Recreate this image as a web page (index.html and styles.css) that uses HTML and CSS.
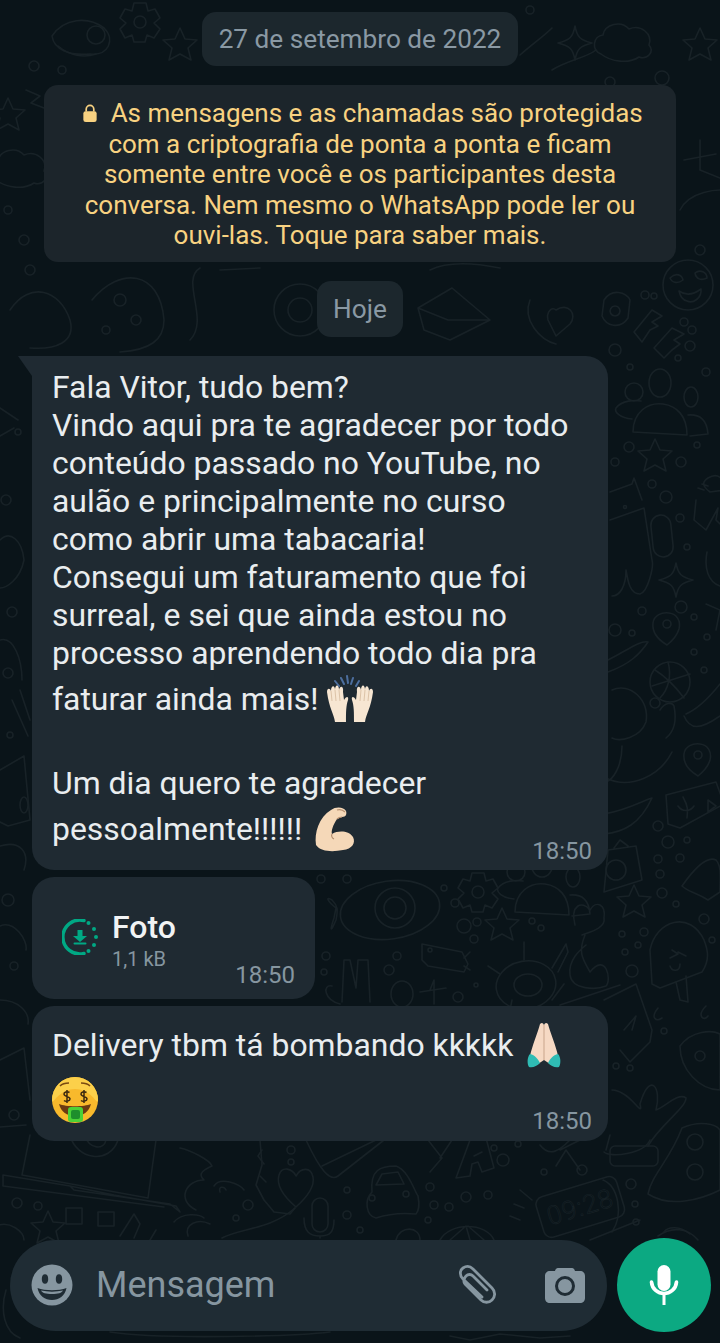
FILE: index.html
```html
<!DOCTYPE html>
<html lang="pt-BR">
<head>
<meta charset="utf-8">
<title>WhatsApp</title>
<link rel="stylesheet" href="styles.css">
</head>
<body>
<div class="screen">
  <svg class="doodles" viewBox="0 0 720 1343" aria-hidden="true">
    <defs>
      <g id="star"><path d="M0-17 5-6 17-5 8 3 11 15 0 9-11 15-8 3-17-5-5-6Z"/></g>
      <g id="spark"><path d="M0-17C2-6 5-3 17 0 5 3 2 6 0 17-2 6-5 3-17 0-5-3-2-6 0-17Z"/></g>
      <g id="pin"><path d="M0 18C-10 12-15 4-14-4-13-12-5-15 2-14 10-13 14-6 12 2 10 9 5 14 0 18Z"/><circle cy="-3" r="4"/></g>
      <g id="gear"><path d="M-6-19 6-19 8-11 15-13 20-4 14 1 20 7 14 16 7 13 5 20-6 20-8 13-15 16-20 7-14 1-20-4-15-13-8-11Z"/><circle r="6"/></g>
      <g id="cloud"><path d="M-24 12C-34 8-32-6-22-7-20-18-4-22 4-13 16-18 28-8 24 3 30 10 22 18 14 15 4 22-14 20-24 12Z"/></g>
      <g id="people"><path d="M-27 20C-27 0-12-10 3-8 17-6 27 4 27 23Z"/><ellipse cy="-29" rx="11" ry="14"/><circle cx="-26" cy="-20" r="9"/><ellipse cx="31" cy="-15" rx="7" ry="10"/><path d="M-28 7C-40 6-46 0-44-4-38-12-25-12-19-11"/><path d="M28 3C40 2 47 8 48 22L30 24"/></g>
      <g id="face"><circle r="25"/><path d="M-18-7C-12-13-6-10-5-5-10-1-16-2-18-7ZM7-12C12-16 19-13 19-7 13-4 8-6 7-12ZM-9 6C-2 11 5 10 13 4 14 13 5 19-1 16-5 15-8 11-9 6Z"/></g>
      <g id="heart"><path d="M0 24C-14 12-20 2-17-8-14-17-4-15 0-7 5-16 15-16 17-6 19 4 10 15 0 24Z"/></g>
    </defs>
    <g class="doodle-lines">
      <!-- top -->
      <use href="#gear" x="140" y="22"/>
      <path d="M52 36C64 18 88 16 104 28 116 40 108 56 90 54 70 56 54 50 52 36Z"/><circle cx="96" cy="35" r="9"/><path d="M58 46C70 56 84 58 96 54"/>
      <use href="#star" x="180" y="45"/><use href="#cloud" x="625" y="42"/>
      <use href="#spark" x="575" y="43"/><use href="#star" x="700" y="45"/>
      <path d="M26 90 40 96 31 103 44 108"/>
      <circle cx="34" cy="66" r="5"/><circle cx="62" cy="70" r="4"/><circle cx="530" cy="10" r="4"/>
      <path d="M520 55C535 42 544 36 552 28"/><path d="M552 70C568 60 586 58 596 50"/><circle cx="662" cy="78" r="7"/><circle cx="610" cy="82" r="5"/>
      <use href="#star" x="8" y="115"/><use href="#cloud" x="20" y="168"/>
      <path d="M700 140 700 170 720 178M684 160 716 154"/><path d="M680 210C690 190 720 190 720 190"/>
      <circle cx="24" cy="240" r="5"/><circle cx="8" cy="210" r="4"/><circle cx="700" cy="250" r="5"/>
      <!-- behind the notices -->
      <circle cx="30" cy="270" r="5"/><path d="M10 310C30 280 60 290 70 320 76 342 56 350 30 348"/>
      <path d="M92 300C120 266 160 270 164 320 164 340 150 350 120 352"/><circle cx="120" cy="300" r="6"/><circle cx="136" cy="320" r="5"/><circle cx="106" cy="330" r="4"/>
      <path d="M200 268C180 280 210 320 190 340M220 270 260 268"/>
      <circle cx="300" cy="310" r="26"/><circle cx="300" cy="310" r="12"/>
      <path d="M418 308 452 288 490 320 450 340 424 330ZM418 308 448 320 490 320"/><path d="M430 270C450 260 480 264 500 268"/>
      <path d="M530 300C522 320 540 340 556 344M556 310C568 302 578 314 570 324L556 336 548 320C546 312 552 306 556 310Z"/>
      <use href="#face" x="688" y="285"/>
      <path d="M604 300C612 288 626 292 630 300L628 318C620 330 606 326 602 316ZM615 306a5 5 0 1 0 .1 0Z"/>
      <path d="M634 332 652 310 662 316 652 322 658 326 650 330 642 342ZM654 348 672 328 684 334 674 340 680 344 672 350 664 358Z"/>
      <circle cx="615" cy="350" r="6"/><circle cx="645" cy="295" r="4"/><circle cx="654" cy="296" r="3"/><circle cx="684" cy="322" r="4"/><circle cx="692" cy="330" r="4"/><circle cx="690" cy="346" r="5"/><circle cx="678" cy="358" r="3"/><circle cx="706" cy="372" r="4"/><circle cx="630" cy="367" r="3"/>
      <use href="#people" x="660" y="412"/>
      <use href="#star" x="655" y="456"/><circle cx="629" cy="447" r="5"/><circle cx="615" cy="462" r="4"/><circle cx="681" cy="462" r="5"/><circle cx="697" cy="445" r="3"/>
      <path d="M708 478C718 472 724 478 724 490L710 492C702 486 702 482 708 478ZM708 486 702 484M704 490 698 488"/>
      <path d="M610 492 632 484 634 478 642 500M610 520 644 508 652 560C654 566 648 592 640 594 630 594 628 582 626 570 626 586 620 596 612 596"/><circle cx="625" cy="507" r="1.5"/>
      <rect x="652" y="515" width="20" height="42" rx="10" transform="rotate(-6 662 536)"/>
      <circle cx="652" cy="484" r="4"/><circle cx="666" cy="497" r="6"/><circle cx="680" cy="518" r="4"/><circle cx="687" cy="547" r="3"/>
      <path d="M696 500 694 520 706 530 718 508 716 520 720 524"/>
      <use href="#spark" x="676" y="580"/><path d="M707 552C704 568 708 582 720 586M706 604 720 610 716 630"/>
      <circle cx="681" cy="607" r="6"/><circle cx="642" cy="611" r="4"/><circle cx="615" cy="630" r="6"/><circle cx="632" cy="633" r="3"/><circle cx="694" cy="617" r="3"/>
      <use href="#pin" x="667" y="627"/>
      <circle cx="670" cy="682" r="20"/><path d="M655 670C668 678 678 690 684 698M668 662C672 676 668 690 660 698M652 686 690 674"/>
      <circle cx="707" cy="637" r="3"/><circle cx="694" cy="652" r="3"/><circle cx="704" cy="670" r="3"/>
      <path d="M608 660C628 650 640 640 648 642 640 654 630 664 608 672"/><path d="M612 690C630 682 650 700 646 722 640 738 620 742 612 738"/>
      <path d="M660 710C665 702 672 702 674 706 676 716 676 730 666 738"/><circle cx="655" cy="703" r="5"/>
      <path d="M686 714C700 708 712 694 720 684M684 716C690 730 700 730 720 716"/>
      <!-- right, lower -->
      <path d="M622 746C622 768 612 780 606 782M606 778C630 790 660 776 672 752"/>
      <use href="#pin" x="698" y="758"/>
      <path d="M666 795 716 782 724 804 680 828 668 824Z"/><path d="M683 797C688 806 688 810 687 818M678 806C682 812 690 812 694 806M708 800 716 806 708 812Z"/>
      <path d="M604 814C628 810 644 800 652 798 640 824 624 832 604 834"/><circle cx="658" cy="826" r="5"/><circle cx="668" cy="842" r="6"/><circle cx="687" cy="840" r="3"/>
      <circle cx="658" cy="859" r="4"/><circle cx="680" cy="858" r="4"/><circle cx="660" cy="874" r="4"/><circle cx="662" cy="893" r="5"/><circle cx="676" cy="904" r="3"/>
      <path d="M608 850 636 846 642 880 604 892ZM614 848 620 840 628 846"/><circle cx="616" cy="870" r="10"/>
      <use href="#star" x="634" y="902"/>
      <path d="M682 886C696 866 708 856 716 860 722 866 720 880 720 892L708 900C696 892 688 892 682 886Z"/>
      <path d="M650 950C656 920 690 910 704 940 708 950 710 960 702 972L660 988 652 984Z"/><path d="M676 982 680 1000 688 1002 686 976"/><path d="M672 950 678 954 670 958M678 952 686 956"/><path d="M670 966C672 972 680 972 680 964"/>
      <circle cx="622" cy="934" r="3"/><circle cx="644" cy="932" r="4"/><circle cx="625" cy="952" r="3"/><circle cx="638" cy="945" r="3"/><circle cx="632" cy="971" r="6"/><circle cx="704" cy="919" r="5"/><circle cx="712" cy="940" r="3"/>
      <path d="M604 1000 636 984 652 1030 650 1042 630 1062 620 1050"/><path d="M624 1030 636 1016 632 1030"/>
      <path d="M658 1008C650 1018 656 1022 662 1018M706 1006C696 1016 704 1022 708 1016"/><circle cx="664" cy="1031" r="3"/>
      <path d="M680 1046C692 1030 712 1030 720 1034V1090C700 1090 680 1070 680 1046Z"/><circle cx="700" cy="1056" r="5"/>
      <circle cx="616" cy="1066" r="3"/><circle cx="630" cy="1068" r="3"/>
      <path d="M612 1090C630 1090 644 1120 640 1104 650 1070 662 1088 656 1110 664 1108 678 1092 686 1098 686 1108 660 1125 648 1146"/><rect x="610" y="1146" width="48" height="20" rx="5"/>
      <path d="M648 1194C652 1174 670 1160 682 1128 700 1120 716 1124 720 1130V1190C700 1200 670 1208 648 1194Z"/><circle cx="695" cy="1142" r="8"/><circle cx="695" cy="1172" r="8"/>
      <circle cx="631" cy="1184" r="5"/><circle cx="635" cy="1204" r="3"/><path d="M603 1180C618 1186 624 1214 612 1232"/>
      <!-- between bubbles, centre right -->
      <ellipse cx="390" cy="910" rx="50" ry="29" transform="rotate(-8 390 910)"/><circle cx="395" cy="908" r="20"/><circle cx="395" cy="908" r="11"/>
      <path d="M336 908C326 900 326 896 332 900 338 906 338 910 336 920 330 934 330 930 334 918Z"/>
      <use href="#gear" x="478" y="892"/>
      <use href="#star" x="502" y="925"/>
      <circle cx="464" cy="926" r="7"/><circle cx="477" cy="922" r="4"/><circle cx="474" cy="939" r="4"/><circle cx="455" cy="903" r="4"/><circle cx="444" cy="888" r="3"/><circle cx="532" cy="921" r="3"/><circle cx="541" cy="928" r="3"/><circle cx="347" cy="879" r="4"/><circle cx="321" cy="879" r="4"/><circle cx="326" cy="956" r="4"/><circle cx="324" cy="972" r="3"/><circle cx="397" cy="956" r="4"/><circle cx="389" cy="970" r="5"/>
      <use href="#people" x="542" y="892"/>
      <path d="M575 925C570 905 582 900 590 910 596 900 606 904 604 918 606 928 590 932 582 935M585 935C578 952 582 958 590 972 606 952 612 980 606 986 596 990 572 990 570 975 568 960 580 950 586 945"/>
      <path d="M422 944 462 952 468 964 464 972 428 966 422 960Z"/><path d="M464 958 470 952M464 966 470 970"/><circle cx="430" cy="950" r="2"/>
      <ellipse cx="526" cy="985" rx="30" ry="24" transform="rotate(-10 526 985)"/><ellipse cx="528" cy="985" rx="14" ry="11"/><path d="M500 974 488 966M552 968 566 944 568 952 558 972M524 960 524 942M510 1010 512 1000M552 1000 564 984"/>
      <path d="M342 1002 344 960 350 960 356 988 358 960 368 960 370 1002M340 1004C324 1000 322 984 332 986"/>
      <ellipse cx="402" cy="994" rx="11" ry="13"/><path d="M430 990 434 980M420 992 446 988M434 1004 434 980"/>
      <circle cx="458" cy="997" r="5"/><circle cx="476" cy="985" r="2"/>
      <path d="M560 1005 620 985"/>
      <!-- bottom band -->
      <path d="M30 1135 22 1175 148 1198 156 1140M3 1175 70 1186 74 1190 170 1204 180 1212 176 1206 114 1195 70 1186M3 1175V1186L164 1207"/>
      <path d="M70 1135C76 1160 110 1165 118 1140"/><path d="M84 1135C90 1150 104 1150 106 1140"/>
      <circle cx="17" cy="1203" r="5"/><circle cx="38" cy="1206" r="4"/>
      <rect x="66" y="1208" width="16" height="16"/><rect x="98" y="1212" width="16" height="14"/>
      <use href="#star" x="48" y="1228"/><path d="M120 1236 134 1214 140 1224 134 1238M150 1240 156 1230"/>
      <path d="M-4 1226C10 1220 24 1232 24 1240"/>
      <path d="M180 1148C190 1150 210 1160 212 1166 198 1172 200 1176 204 1180 186 1180 176 1200 196 1210M174 1222C182 1212 200 1214 204 1218M188 1236C184 1224 198 1218 210 1224"/>
      <path d="M214 1186C220 1176 240 1184 244 1190M220 1192C218 1186 224 1186 226 1190"/>
      <path d="M260 1140 262 1165 256 1185 264 1200 274 1212 290 1214 295 1208"/><path d="M262 1150 258 1156 264 1164M260 1176 266 1182"/>
      <circle cx="291" cy="1150" r="4"/><circle cx="291" cy="1162" r="3"/><circle cx="248" cy="1205" r="5"/><circle cx="236" cy="1218" r="3"/>
      <path d="M222 1238C240 1228 270 1230 295 1208"/>
      <use href="#heart" x="296" y="1183"/>
      <rect x="312" y="1198" width="16" height="34" rx="8"/><path d="M304 1218C304 1232 310 1236 320 1236 330 1236 334 1232 334 1220M320 1236V1238"/>
      <path d="M306 1140C320 1170 330 1182 338 1176L384 1140M322 1166 376 1140"/>
      <path d="M372 1192C370 1170 380 1166 396 1166 408 1170 414 1190 418 1196 420 1206 418 1212 416 1214 396 1212 382 1216 376 1218 366 1216 364 1200 372 1192Z"/><path d="M376 1185 382 1174 398 1172 404 1184Z"/><circle cx="372" cy="1198" r="3"/><circle cx="406" cy="1194" r="3"/>
      <circle cx="347" cy="1190" r="3"/><circle cx="347" cy="1215" r="4"/><circle cx="430" cy="1187" r="4"/><circle cx="434" cy="1205" r="4"/><circle cx="449" cy="1207" r="4"/><circle cx="466" cy="1197" r="5"/><circle cx="488" cy="1195" r="4"/><circle cx="428" cy="1220" r="3"/><circle cx="360" cy="1230" r="3"/>
      <path d="M456 1178 470 1140 486 1138 494 1168 482 1172 478 1162 472 1164 470 1176Z"/><path d="M474 1156 482 1152"/>
      <path d="M428 1140 442 1158 430 1172M452 1140 440 1158"/>
      <circle cx="503" cy="1160" r="6"/><circle cx="494" cy="1148" r="3"/><circle cx="518" cy="1144" r="3"/>
      <path d="M396 1240C400 1225 420 1226 420 1240M440 1240C450 1222 486 1222 494 1240M450 1240 466 1226 470 1240M484 1240 468 1226"/>
      <path d="M540 1145C550 1158 560 1150 570 1140M560 1150 580 1140M556 1166 566 1150 580 1170"/>
      <circle cx="582" cy="1170" r="5"/><circle cx="544" cy="1172" r="3"/>
      <path d="M520 1190 532 1200M514 1204 524 1208M510 1216 520 1220"/>
      <g transform="rotate(-17 580 1206)"><rect x="538" y="1186" width="84" height="42" rx="8"/><text class="doodle-text" x="580" y="1216">09:28</text></g>
      <path d="M604 1152C610 1158 644 1154 650 1140M610 1135 606 1150"/>
      <path d="M590 1240 640 1220"/><circle cx="636" cy="1222" r="3"/>
      <path d="M664 1232C668 1226 680 1226 690 1234"/>
      <!-- left strip -->
      <path d="M14 428 0 436M0 408 18 420"/><circle cx="18" cy="432" r="3"/><circle cx="6" cy="500" r="5"/>
      <path d="M0 540C10 530 22 540 24 560 20 580 6 588 0 588"/>
      <circle cx="12" cy="612" r="5"/>
      <path d="M0 640C14 636 22 660 22 680"/><circle cx="8" cy="673" r="5"/><path d="M12 700 28 736M20 690 30 720"/>
      <circle cx="10" cy="735" r="3"/>
      <path d="M0 770 24 756 30 820 8 826 0 822"/><ellipse cx="24" cy="805" rx="4" ry="8"/>
      <path d="M0 846C20 840 30 852 24 870"/>
      <circle cx="8" cy="900" r="6"/><path d="M0 926C14 920 28 940 26 950"/><circle cx="14" cy="966" r="4"/>
      <path d="M0 1000C18 1000 30 1012 28 1024"/><path d="M0 1060 24 1048 30 1100"/><circle cx="14" cy="1115" r="5"/>
      <path d="M0 1127 26 1125"/>
      <!-- input band -->
      <path d="M6 1290C0 1310 4 1332 20 1338M110 1332C160 1340 300 1336 330 1332M450 1336 470 1340 500 1334 540 1338 570 1336"/>
      <path d="M658 1236C672 1226 688 1228 698 1240"/>
    </g>
  </svg>

  <header class="system-stack">
    <div class="pill">27 de setembro de 2022</div>
    <div class="notice">
      <svg class="lock" viewBox="0 0 16 20" aria-hidden="true"><path d="M4 8V5.500a4 4 0 0 1 8 0V8" fill="none" stroke="currentColor" stroke-width="1.800"/><rect x="1" y="7.500" width="14" height="11.500" rx="2.500" fill="currentColor"/></svg>
      As mensagens e as chamadas são protegidas<br>
      com a criptografia de ponta a ponta e ficam<br>
      somente entre você e os participantes desta<br>
      conversa. Nem mesmo o WhatsApp pode ler ou<br>
      ouvi-las. Toque para saber mais.
    </div>
    <div class="pill pill-today">Hoje</div>
  </header>

  <main class="messages">
    <article class="bubble bubble-first">
      <div class="line">Fala Vitor, tudo bem?</div>
      <div class="line">Vindo aqui pra te agradecer por todo</div>
      <div class="line">conteúdo passado no YouTube, no</div>
      <div class="line">aulão e principalmente no curso</div>
      <div class="line">como abrir uma tabacaria!</div>
      <div class="line">Consegui um faturamento que foi</div>
      <div class="line">surreal, e sei que ainda estou no</div>
      <div class="line">processo aprendendo todo dia pra</div>
      <div class="line line-emoji">faturar ainda mais!
        <svg class="emoji emoji-hands" viewBox="0 0 48 48" aria-hidden="true">
          <path d="M21 1 22 8M15 3 18 9M27 3 25 9M9 6 13 11M33 6 30 11" stroke="#4d6f9f" stroke-width="2" stroke-linecap="round" fill="none"/>
          <g id="hand">
            <path d="M1 17C1 13 4 13 5 16 5 10 9 10 9 15 9 9 13 9 13 15 14 10 18 11 17 17L18 25C20 21 23 21 22 25 20 31 20 37 20 47H9C8 39 3 33 1 17Z" fill="#f7e6d2"/>
            <path d="M5 16 6 26M9 15 10 26M13 15 14 26" stroke="#dcc3a8" stroke-width="1" fill="none"/>
          </g>
          <use href="#hand" transform="matrix(-1 0 0 1 48 0)"/>
        </svg>
      </div>
      <div class="line line-blank"></div>
      <div class="line">Um dia quero te agradecer</div>
      <div class="line line-emoji">pessoalmente!!!!!!
        <svg class="emoji emoji-muscle" viewBox="0 0 44 48" aria-hidden="true">
          <path d="M3 40C1 28 6 12 18 5 23 1 31 2 33 6 34 9 33 12 29 12L24 14C20 20 18 26 19 29 26 25 36 26 40 32 43 38 39 44 30 45 20 47 8 47 3 40Z" fill="#f5d8b8"/>
          <path d="M24 5C27 4 30 5 32 7M24 14C26 12 28 12 29 12M19 29C18 31 19 33 21 34" stroke="#b58f6f" stroke-width="1.200" fill="none"/>
        </svg>
      </div>
      <time class="stamp">18:50</time>
    </article>

    <article class="bubble bubble-file">
      <svg class="download" viewBox="0 0 36 36" aria-hidden="true">
        <path d="M22 1.500A17 17 0 1 0 22 34.500" fill="none" stroke="#00a884" stroke-width="3.400" stroke-linecap="round"/>
        <g fill="#00a884"><circle cx="26.500" cy="4" r="2"/><circle cx="32" cy="10" r="2"/><circle cx="34" cy="18" r="2"/><circle cx="32" cy="26" r="2"/><circle cx="26.500" cy="32" r="2"/></g>
        <path d="M15.500 11h5v6H25L18 23 11 17h4.500Z" fill="#00a884"/><rect x="11.500" y="23.500" width="13" height="2" rx="1" fill="#00a884"/>
      </svg>
      <div class="file-info">
        <div class="file-title">Foto</div>
        <div class="file-size">1,1 kB</div>
      </div>
      <time class="stamp">18:50</time>
    </article>

    <article class="bubble bubble-last">
      <div class="line line-emoji line-pray">Delivery tbm tá bombando kkkkk
        <svg class="emoji emoji-pray" viewBox="0 0 36 46" aria-hidden="true">
          <path d="M14 2C16 0 17 1 18 3 19 1 20 0 22 2 24 10 30 24 32 34L24 42 18 38 12 42 4 34C6 24 12 10 14 2Z" fill="#f6d9c4"/>
          <path d="M18 3V38" stroke="#c9a58c" stroke-width="1"/>
          <path d="M4 32C1 35 1 42 3 45 7 46 11 44 14 41 12 37 9 33 4 32ZM32 32C35 35 35 42 33 45 29 46 25 44 22 41 24 37 27 33 32 32Z" fill="#2fbcb4"/>
        </svg>
      </div>
      <div class="line line-emoji line-money">
        <svg class="emoji emoji-money" viewBox="0 0 46 46" aria-hidden="true">
          <circle cx="23" cy="23" r="23" fill="#f8b92c"/><path d="M23 0A23 23 0 0 1 46 23C46 30 40 12 23 12S0 30 0 23A23 23 0 0 1 23 0Z" fill="#fcd04a"/>
          <path d="M8 9C11 6 14 6 17 6M38 9C35 6 32 6 29 6" stroke="#7a4a12" stroke-width="1.600" fill="none"/>
          <path d="M7 27C14 30 32 30 39 27 37 35 31 39 23 39S9 35 7 27Z" fill="#6b3a12"/>
          <rect x="16" y="30" width="15" height="15" rx="3" fill="#4cd137"/><rect x="19" y="33" width="9" height="9" rx="2" fill="#1e8e2c"/>
          <path d="M17.500 15.500C15 14 12 15 12 17 12 20 18 19 18 22 18 24 14 25 12 23.500M15 13V26M34.500 15.500C32 14 29 15 29 17 29 20 35 19 35 22 35 24 31 25 29 23.500M32 13V26" fill="none" stroke="#3d2a10" stroke-width="1.500"/>
        </svg>
      </div>
      <time class="stamp">18:50</time>
    </article>
  </main>

  <footer class="composer">
    <div class="input">
      <svg class="icon-smile" viewBox="0 0 42 42" aria-hidden="true">
        <circle cx="21" cy="21" r="20.500" fill="#8696a0"/>
        <ellipse cx="14" cy="15" rx="3.200" ry="4.800" fill="#1f2c34"/><ellipse cx="28" cy="15" rx="3.200" ry="4.800" fill="#1f2c34"/>
        <path d="M6.500 24C14 27 28 27 35.500 24 34 32 28 36 21 36S8 32 6.500 24Z" fill="#1f2c34"/><path d="M10 26.500C17 28 25 28 32 26.500 31 29 27 30 21 30S11 29 10 26.500Z" fill="#8696a0"/>
      </svg>
      <span class="placeholder">Mensagem</span>
      <svg class="icon-clip" viewBox="0 0 44 42" aria-hidden="true">
        <path d="M28 33 9 15C5 11 6 6 9 4 12 2 16 2 19 5L38 24C42 28 41 33 38 36 35 39 30 39 27 36L11 20C9 18 10 14 12 12 14 10 17 10 19 12L33 26" fill="none" stroke="#8696a0" stroke-width="2.800" stroke-linecap="round"/>
      </svg>
      <svg class="icon-camera" viewBox="0 0 40 36" aria-hidden="true">
        <path d="M10 4C11 1 12 1 14 1H26C28 1 29 1 30 4H35C38 4 40 6 40 9V31C40 34 38 36 35 36H5C2 36 0 34 0 31V9C0 6 2 4 5 4Z" fill="#8696a0"/>
        <circle cx="20" cy="19" r="8.500" fill="none" stroke="#1f2c34" stroke-width="3"/>
      </svg>
    </div>
    <button class="mic" type="button" aria-label="Gravar">
      <svg viewBox="0 0 30 42" aria-hidden="true">
        <rect x="8.500" y="1" width="13" height="26" rx="6.500" fill="#fff"/>
        <path d="M2.500 18C3 25 9 29.500 15 29.500S27 25 27.500 18" fill="none" stroke="#fff" stroke-width="3.600" stroke-linecap="round"/>
        <rect x="13.500" y="29" width="3" height="12" fill="#fff"/>
      </svg>
    </button>
  </footer>
</div>
</body>
</html>
```
FILE: styles.css
```css
* { box-sizing: border-box; }
html, body { margin: 0; padding: 0; }
body { background: #0a1419; font-family: Roboto, "Liberation Sans", sans-serif; }

.screen {
  position: relative;
  width: 720px;
  height: 1343px;
  overflow: hidden;
  display: flex;
  flex-direction: column;
  background: #0a1419;
  padding-top: 12px;
}
.doodles { position: absolute; inset: 0; width: 720px; height: 1343px; }
.doodle-lines { fill: none; stroke: #182227; stroke-width: 1.600; stroke-linecap: round; stroke-linejoin: round; }
.doodle-text { fill: none; stroke: #182227; stroke-width: 0.600; font: 300 26px Roboto, sans-serif; text-anchor: middle; letter-spacing: 1px; }

.system-stack, .messages, .composer { position: relative; }

.system-stack { display: flex; flex-direction: column; align-items: center; }
.pill {
  background: #1c272d;
  color: #8a99a4;
  border-radius: 14px;
  height: 54px;
  padding: 0 16.500px;
  display: flex;
  align-items: center;
  font-size: 26.200px;
}
.pill-today { height: 56px; margin-top: 19px; }
.notice {
  width: 632px;
  height: 177px;
  margin-top: 19px;
  padding: 13px 0 0;
  background: #1c252b;
  border-radius: 14px;
  color: #f8d281;
  font-size: 26px;
  line-height: 30.500px;
  text-align: center;
}
.lock { width: 16px; height: 19px; margin: 0 6px 0 5px; vertical-align: -1px; color: #f8d281; }

.messages { display: flex; flex-direction: column; align-items: flex-start; gap: 7px; margin: 19px 0 0 32px; }
.bubble { position: relative; background: #1f2a32; border-radius: 22px; color: #e9edef; }
.bubble-first {
  width: 576px;
  height: 514px;
  padding: 12px 0 0 20px;
  border-top-left-radius: 0;
}
.bubble-first::before {
  content: "";
  position: absolute;
  left: -14px;
  top: 0;
  width: 14px;
  height: 20px;
  background: #1f2a32;
  clip-path: polygon(0 0, 100% 0, 100% 100%);
}
.line { font-size: 31.900px; line-height: 38px; height: 38px; white-space: nowrap; }
.line-emoji { display: flex; align-items: center; height: 46px; margin-top: 4px; }
.line-blank { height: 42px; }
.emoji { flex: none; }
.emoji-hands { width: 48px; height: 48px; margin-left: 8px; }
.emoji-muscle { width: 44px; height: 48px; margin-left: 11px; }
.emoji-pray { width: 36px; height: 46px; margin-left: 13px; }
.emoji-money { width: 46px; height: 46px; }
.stamp { position: absolute; right: 16px; bottom: 5px; color: #8696a0; font-size: 24px; line-height: 28px; }

.bubble-file {
  width: 283px;
  height: 122px;
  display: flex;
  align-items: flex-start;
  padding: 31px 0 0 30px;
}
.bubble-file .stamp { right: 20px; bottom: 10px; }
.bubble-last .stamp { bottom: 6px; }
.download { width: 36px; height: 36px; margin-top: 11px; flex: none; }
.file-info { margin-left: 14px; }
.file-title { color: #f1f3f4; font-size: 32px; font-weight: 500; line-height: 38px; }
.file-size { color: #8696a0; font-size: 20px; line-height: 24px; margin-top: 1px; }

.bubble-last { width: 576px; height: 135px; padding: 16px 0 0 20px; }
.line-pray { margin-top: 0; }
.line-money { margin-top: 9px; }

.composer {
  margin-top: auto;
  display: flex;
  align-items: center;
  gap: 10px;
  padding: 0 9px 11px 10px;
}
.input {
  flex: 1;
  height: 91px;
  display: flex;
  align-items: center;
  background: #1f2c34;
  border-radius: 46px;
  padding: 0 22px 0 21px;
}
.icon-smile { width: 42px; height: 42px; flex: none; }
.placeholder { margin-left: 23px; color: #8696a0; font-size: 36px; flex: 1; }
.icon-clip { width: 44px; height: 42px; flex: none; }
.icon-camera { width: 40px; height: 36px; margin-left: 47px; flex: none; }
.mic {
  width: 94px;
  height: 94px;
  flex: none;
  border: 0;
  padding: 0;
  border-radius: 50%;
  background: #0ca982;
  display: flex;
  align-items: center;
  justify-content: center;
}
.mic svg { width: 30px; height: 42px; }
```
